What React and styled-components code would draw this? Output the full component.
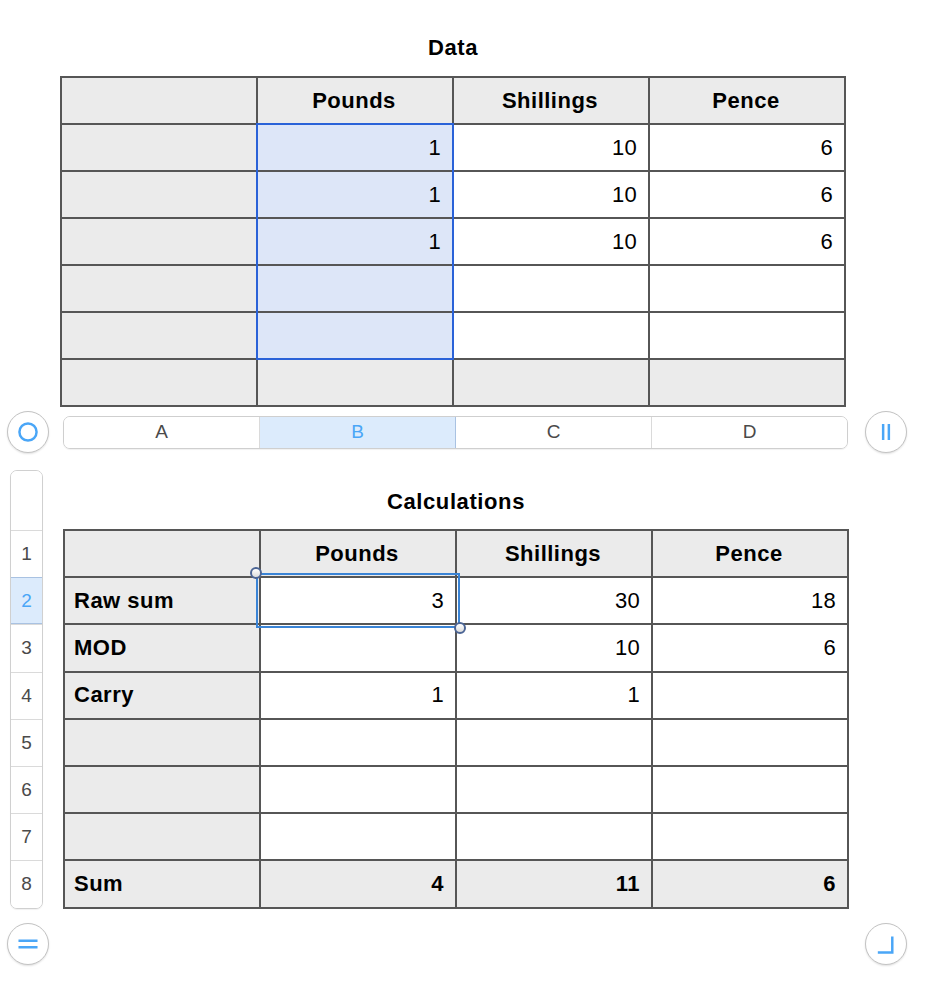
import React from "react";
import styled, { createGlobalStyle } from "styled-components";

const GlobalStyle = createGlobalStyle`
  html, body {
    margin: 0;
    padding: 0;
    background: #fff;
    font-family: "Liberation Sans", Arial, Helvetica, sans-serif;
  }
`;

const BLUE = "#4aa6f7";
const GRID = "#565656";
const HEAD = "#ebebeb";

const Page = styled.div`
  width: 942px;
  height: 986px;
  display: flex;
  flex-direction: column;
  overflow: hidden;
`;

const Section = styled.section`
  display: flex;
  flex-direction: column;
  margin-left: ${({ left }) => left}px;
  width: 786px;
`;

const Title = styled.h2`
  margin: 0;
  box-sizing: border-box;
  height: ${({ h }) => h}px;
  padding-top: ${({ top }) => top}px;
  text-align: center;
  font-size: 22px;
  line-height: 22px;
  letter-spacing: 0.6px;
  font-weight: bold;
  color: #000;
`;

const TableWrap = styled.div`
  position: relative;
`;

const Grid = styled.div`
  display: grid;
  grid-template-columns: repeat(4, 194px);
  grid-auto-rows: ${({ rowH }) => rowH}px;
  gap: 2px;
  padding: 2px;
  background: ${GRID};
`;

const Cell = styled.div`
  display: flex;
  align-items: center;
  justify-content: ${({ align }) =>
    align === "center" ? "center" : align === "left" ? "flex-start" : "flex-end"};
  padding: 0 11px 0 9px;
  background: ${({ tone }) =>
    tone === "head" ? HEAD : tone === "sel" ? "#dde6f8" : "#fff"};
  font-size: 22px;
  font-weight: ${({ bold }) => (bold ? "bold" : "normal")};
  letter-spacing: ${({ bold }) => (bold ? "0.5px" : "0.3px")};
  color: #000;
`;

const ColumnSelection = styled.div`
  position: absolute;
  left: 196px;
  top: 47px;
  width: 198px;
  height: 237px;
  box-sizing: border-box;
  border: 2px solid #2a62d8;
  pointer-events: none;
`;

const CellSelection = styled.div`
  position: absolute;
  left: 193px;
  top: 44px;
  width: 204px;
  height: 55px;
  box-sizing: border-box;
  border: 2px solid #3a84d6;
  pointer-events: none;
`;

const Handle = styled.span`
  position: absolute;
  width: 12px;
  height: 12px;
  border-radius: 50%;
  box-sizing: border-box;
  border: 2px solid #4c6595;
  background: linear-gradient(#ffffff, #dcdcdc);
  ${({ corner }) =>
    corner === "tl" ? "left: -8px; top: -8px;" : "right: -8px; bottom: -8px;"}
`;

const ControlRow = styled.div`
  display: flex;
  align-items: center;
  height: 42px;
  margin-top: 4px;
  padding-left: 7px;
`;

const RoundButton = styled.button`
  width: 42px;
  height: 42px;
  padding: 0;
  border-radius: 50%;
  border: 1.5px solid #c3c3c3;
  background: #fff;
  box-shadow: 0 1px 2px rgba(0, 0, 0, 0.12);
  display: flex;
  align-items: center;
  justify-content: center;
  flex-shrink: 0;
`;

const ColumnBar = styled.div`
  display: flex;
  width: 785px;
  height: 33px;
  margin: 0 17px 0 14px;
  border: 1px solid #cfcfcf;
  border-radius: 7px;
  box-sizing: border-box;
  overflow: hidden;
  box-shadow: 0 1px 1px rgba(0, 0, 0, 0.06);
`;

const ColumnTab = styled.div`
  flex: 1;
  display: flex;
  align-items: center;
  justify-content: center;
  font-size: 19px;
  color: ${({ active }) => (active ? BLUE : "#4a4a4a")};
  background: ${({ active }) => (active ? "#dcebfc" : "#fff")};
  border-right: 1px solid ${({ active }) => (active ? "#a9c2e2" : "#dadada")};
  &:last-child {
    border-right: none;
  }
`;

const CalcArea = styled.div`
  display: flex;
  align-items: flex-start;
  margin-top: 17px;
`;

const RowStrip = styled.div`
  display: flex;
  flex-direction: column;
  width: 33px;
  margin: 0 20px 0 10px;
  border: 1px solid #d0d0d0;
  border-radius: 7px;
  box-sizing: border-box;
  overflow: hidden;
  box-shadow: 0 1px 1px rgba(0, 0, 0, 0.06);
`;

const StripCell = styled.div`
  height: ${({ h }) => h}px;
  display: flex;
  align-items: center;
  justify-content: center;
  font-size: 19px;
  color: ${({ active }) => (active ? BLUE : "#4a4a4a")};
  background: ${({ active }) => (active ? "#dcebfc" : "#fff")};
  border-top: 1px solid ${({ active }) => (active ? "#a9c2e2" : "#dadada")};
  border-bottom: ${({ active }) => (active ? "1px solid #a9c2e2" : "none")};
  box-sizing: border-box;
  &:first-child {
    border-top: none;
  }
`;

const BottomRow = styled.div`
  display: flex;
  justify-content: space-between;
  padding: 0 35px 0 7px;
  margin-top: 14px;
`;

const Icon = ({ children }) => (
  <svg width="42" height="42" viewBox="0 0 42 42" fill="none" stroke={BLUE} strokeWidth="2.6">
    {children}
  </svg>
);

const dataRows = [
  ["", "1", "10", "6"],
  ["", "1", "10", "6"],
  ["", "1", "10", "6"],
  ["", "", "", ""],
  ["", "", "", ""],
];

const calcRows = [
  ["Raw sum", "3", "30", "18"],
  ["MOD", "", "10", "6"],
  ["Carry", "1", "1", ""],
  ["", "", "", ""],
  ["", "", "", ""],
  ["", "", "", ""],
];

const headers = ["", "Pounds", "Shillings", "Pence"];

function HeaderRow() {
  return headers.map((h, i) => (
    <Cell key={"h" + i} tone="head" align="center" bold>
      {h}
    </Cell>
  ));
}

export default function App() {
  return (
    <Page>
      <GlobalStyle />
      <Section left={60}>
        <Title h={76} top={37}>Data</Title>
        <TableWrap>
          <Grid rowH={45}>
            <HeaderRow />
            {dataRows.map((row, r) =>
              row.map((v, c) => (
                <Cell key={r + "-" + c} tone={c === 0 ? "head" : c === 1 ? "sel" : "body"}>
                  {v}
                </Cell>
              ))
            )}
            {headers.map((_, c) => (
              <Cell key={"f" + c} tone="head" />
            ))}
          </Grid>
          <ColumnSelection />
        </TableWrap>
      </Section>

      <ControlRow>
        <RoundButton>
          <Icon>
            <circle cx="21" cy="21" r="9" />
          </Icon>
        </RoundButton>
        <ColumnBar>
          {["A", "B", "C", "D"].map((l) => (
            <ColumnTab key={l} active={l === "B"}>
              {l}
            </ColumnTab>
          ))}
        </ColumnBar>
        <RoundButton>
          <Icon>
            <path d="M18 12.5V29.5M24 12.5V29.5" />
          </Icon>
        </RoundButton>
      </ControlRow>

      <CalcArea>
        <RowStrip>
          <StripCell h={59} />
          {[1, 2, 3, 4, 5, 6, 7, 8].map((n) => (
            <StripCell key={n} h={47.2} active={n === 2}>
              {n}
            </StripCell>
          ))}
        </RowStrip>
        <Section left={0}>
          <Title h={59} top={21}>Calculations</Title>
          <TableWrap>
            <Grid rowH={45.2}>
              <HeaderRow />
              {calcRows.map((row, r) =>
                row.map((v, c) => (
                  <Cell
                    key={r + "-" + c}
                    tone={c === 0 ? "head" : "body"}
                    align={c === 0 ? "left" : "right"}
                    bold={c === 0}
                  >
                    {v}
                  </Cell>
                ))
              )}
              {["Sum", "4", "11", "6"].map((v, c) => (
                <Cell key={"s" + c} tone="head" align={c === 0 ? "left" : "right"} bold>
                  {v}
                </Cell>
              ))}
            </Grid>
            <CellSelection>
              <Handle corner="tl" />
              <Handle corner="br" />
            </CellSelection>
          </TableWrap>
        </Section>
      </CalcArea>

      <BottomRow>
        <RoundButton>
          <Icon>
            <path d="M11 17.7H31M11 24.3H31" />
          </Icon>
        </RoundButton>
        <RoundButton>
          <Icon>
            <path d="M27.6 13V30H12.4" />
          </Icon>
        </RoundButton>
      </BottomRow>
    </Page>
  );
}
